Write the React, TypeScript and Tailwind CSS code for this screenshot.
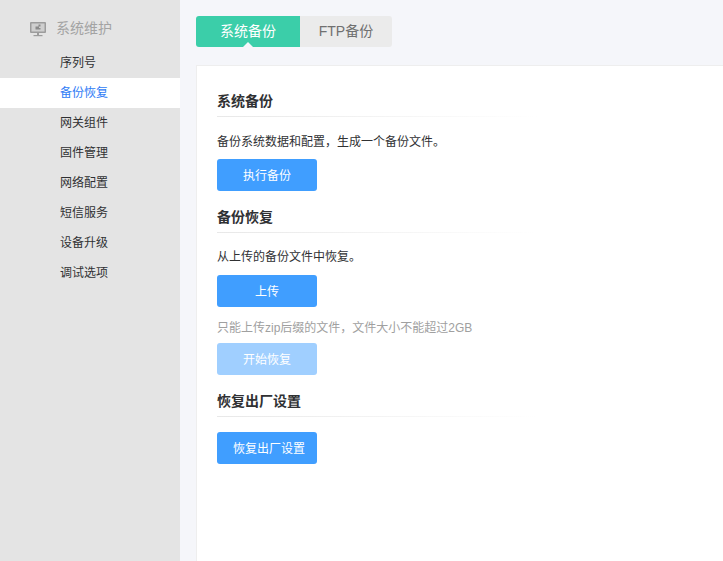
const menuItems = ['序列号', '备份恢复', '网关组件', '固件管理', '网络配置', '短信服务', '设备升级', '调试选项'];

function MonitorIcon() {
  return (
    <svg width="16" height="16" viewBox="0 0 16 16" fill="none">
      <rect x="0" y="1" width="16" height="11" rx="1" fill="#9c9c9c" />
      <rect x="1.5" y="2.5" width="13" height="8" fill="#cfcfcf" />
      <path d="M8.5 3.5h2v2h-2zM5.5 5.5h3.5v1.5h1.5v1.5h-5z" fill="#8a8a8a" />
      <path d="M7 12h2v2H7z" fill="#9c9c9c" />
      <rect x="3.5" y="14" width="9" height="1.2" fill="#9c9c9c" />
    </svg>
  );
}

function SectionTitle({ children }: { children: React.ReactNode }) {
  return (
    <div>
      <div className="text-[14px] leading-[20px] font-bold text-[#303133]">{children}</div>
      <div className="mt-[5px] h-px w-[320px] bg-gradient-to-r from-[#e8e8e8] to-white" />
    </div>
  );
}

function ActionButton({ label, disabled, indent }: { label: string; disabled?: boolean; indent?: boolean }) {
  return (
    <button
      className={`block w-[100px] h-[32px] rounded-[3px] pt-[2px] text-[12px] leading-[18px] text-white text-center ${
        disabled ? 'bg-[#a0cfff]' : 'bg-[#409eff]'
      } ${indent ? 'pl-[4px]' : ''}`}
    >
      {label}
    </button>
  );
}

export default function App() {
  return (
    <div className="flex h-[561px] w-[723px] overflow-hidden bg-[#f5f6fa] font-['Liberation_Sans','Noto_Sans_CJK_SC',sans-serif]">
      {/* Sidebar */}
      <div className="w-[180px] shrink-0 bg-[#e4e4e4]">
        <div className="flex h-[48px] items-center pl-[30px] pt-[9px] gap-[10px]">
          <MonitorIcon />
          <span className="text-[14px] text-[#a3a3a3]">系统维护</span>
        </div>
        {menuItems.map((item) => (
          <div
            key={item}
            className={`h-[30px] pl-[60px] text-[12px] leading-[30px] ${
              item === '备份恢复' ? 'bg-white text-[#2f7cf6]' : 'text-[#303133]'
            }`}
          >
            {item}
          </div>
        ))}
      </div>

      {/* Main */}
      <div className="flex-1 overflow-hidden pt-[16px] pl-[16px]">
        <div className="flex h-[31px] w-[196px] overflow-hidden rounded-[3px] text-[14px] leading-[31px] text-center">
          <div className="relative w-[104px] bg-[#3bcea9] text-white">
            系统备份
            <span className="absolute bottom-0 left-1/2 -ml-[5px] border-x-[5px] border-b-[5px] border-x-transparent border-b-[#f5f6fa]" />
          </div>
          <div className="w-[92px] bg-[#ebebeb] text-[#707070]">FTP备份</div>
        </div>

        <div className="mt-[18px] h-[520px] w-[560px] border border-[#eeeeee] bg-white pl-[20px] pt-[25px]">
          <SectionTitle>系统备份</SectionTitle>
          <p className="mt-[16px] text-[12px] leading-[18px] text-[#303133]">备份系统数据和配置，生成一个备份文件。</p>
          <div className="mt-[8px]">
            <ActionButton label="执行备份" />
          </div>

          <div className="mt-[16px]">
            <SectionTitle>备份恢复</SectionTitle>
          </div>
          <p className="mt-[15px] text-[12px] leading-[18px] text-[#303133]">从上传的备份文件中恢复。</p>
          <div className="mt-[9px]">
            <ActionButton label="上传" />
          </div>
          <p className="mt-[12px] text-[12px] leading-[18px] text-[#a0a0a0]">只能上传zip后缀的文件，文件大小不能超过2GB</p>
          <div className="mt-[6px]">
            <ActionButton label="开始恢复" disabled />
          </div>

          <div className="mt-[16px]">
            <SectionTitle>恢复出厂设置</SectionTitle>
          </div>
          <div className="mt-[15px]">
            <ActionButton label="恢复出厂设置" indent />
          </div>
        </div>
      </div>
    </div>
  );
}
